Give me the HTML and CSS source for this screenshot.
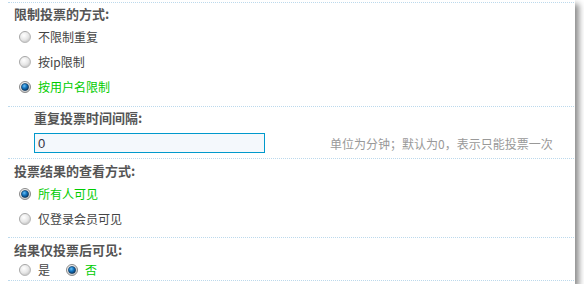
FILE: index.html
```html
<!DOCTYPE html>
<html>
<head>
<meta charset="utf-8">
<link rel="stylesheet" href="styles.css">
</head>
<body>
<svg width="0" height="0" class="defs">
  <defs>
    <radialGradient id="gOff" cx="40%" cy="35%" r="70%">
      <stop offset="0" stop-color="#ffffff"/>
      <stop offset="0.6" stop-color="#e6e6e6"/>
      <stop offset="1" stop-color="#bdbdbd"/>
    </radialGradient>
    <linearGradient id="gRing" x1="0" y1="0" x2="1" y2="1">
      <stop offset="0" stop-color="#9c9c9c"/>
      <stop offset="1" stop-color="#c4c4c4"/>
    </linearGradient>
    <radialGradient id="gDot" cx="40%" cy="35%" r="70%">
      <stop offset="0" stop-color="#6fc0f0"/>
      <stop offset="0.45" stop-color="#1477c4"/>
      <stop offset="1" stop-color="#08345e"/>
    </radialGradient>
  </defs>
</svg>
<div class="panel">
  <div class="sec s1">
    <div class="title">限制投票的方式:</div>
    <div class="opt"><svg class="radio" viewBox="0 0 12 12"><circle cx="6" cy="6" r="5.5" fill="url(#gOff)" stroke="url(#gRing)" stroke-width="1"/></svg><span class="lbl">不限制重复</span></div>
    <div class="opt"><svg class="radio" viewBox="0 0 12 12"><circle cx="6" cy="6" r="5.5" fill="url(#gOff)" stroke="url(#gRing)" stroke-width="1"/></svg><span class="lbl">按ip限制</span></div>
    <div class="opt"><svg class="radio" viewBox="0 0 12 12"><circle cx="6" cy="6" r="5.5" fill="url(#gOff)" stroke="#8a8a8a" stroke-width="1"/><circle cx="6" cy="6" r="3.6" fill="url(#gDot)" stroke="#0a2f52" stroke-width="0.6"/></svg><span class="lbl on">按用户名限制</span></div>
  </div>
  <div class="sec s2">
    <div class="title">重复投票时间间隔:</div>
    <div class="inrow">
      <input class="field" type="text" value="0">
      <span class="hint">单位为分钟；默认为0，表示只能投票一次</span>
    </div>
  </div>
  <div class="sec s3">
    <div class="title">投票结果的查看方式:</div>
    <div class="opt"><svg class="radio" viewBox="0 0 12 12"><circle cx="6" cy="6" r="5.5" fill="url(#gOff)" stroke="#8a8a8a" stroke-width="1"/><circle cx="6" cy="6" r="3.6" fill="url(#gDot)" stroke="#0a2f52" stroke-width="0.6"/></svg><span class="lbl on">所有人可见</span></div>
    <div class="opt"><svg class="radio" viewBox="0 0 12 12"><circle cx="6" cy="6" r="5.5" fill="url(#gOff)" stroke="url(#gRing)" stroke-width="1"/></svg><span class="lbl">仅登录会员可见</span></div>
  </div>
  <div class="sec s4">
    <div class="title">结果仅投票后可见:</div>
    <div class="opt inline">
      <svg class="radio" viewBox="0 0 12 12"><circle cx="6" cy="6" r="5.5" fill="url(#gOff)" stroke="url(#gRing)" stroke-width="1"/></svg><span class="lbl">是</span>
      <svg class="radio second" viewBox="0 0 12 12"><circle cx="6" cy="6" r="5.5" fill="url(#gOff)" stroke="#8a8a8a" stroke-width="1"/><circle cx="6" cy="6" r="3.6" fill="url(#gDot)" stroke="#0a2f52" stroke-width="0.6"/></svg><span class="lbl on">否</span>
    </div>
  </div>
</div>
</body>
</html>
```

FILE: styles.css
```css
html, body {
  margin: 0;
  padding: 0;
  background: #ffffff;
}
body {
  font-family: "Noto Sans CJK SC", "Liberation Sans", sans-serif;
  font-size: 12px;
  color: #444;
}
.defs {
  position: absolute;
  width: 0;
  height: 0;
}
.panel {
  width: 566px;
  height: 282px;
  padding: 2px 1px 0 8px;
  background: #ffffff;
  box-shadow: 4px 4px 6px rgba(0, 0, 0, 0.45);
}
.sec {
  border-top: 1px dotted #bcd9ec;
  box-sizing: border-box;
}
.s1 { height: 104px; padding-top: 1px; }
.s2 { height: 52px; padding-top: 1px; }
.s3 { height: 79px; padding-top: 2px; }
.s4 { height: 44px; padding-top: 2px; border-bottom: 1px dotted #bcd9ec; }

.title {
  height: 20px;
  line-height: 20px;
  font-size: 13px;
  font-weight: bold;
  color: #555;
  padding-left: 6px;
}
.s2 .title { padding-left: 26px; }
.opt {
  display: flex;
  align-items: center;
  height: 25px;
  padding-left: 11px;
}
.s4 .opt { height: 20px; }
.radio {
  width: 12px;
  height: 12px;
  flex: none;
}
.radio.second { margin-left: 16px; }
.lbl {
  margin-left: 7px;
  line-height: 16px;
  color: #444;
}
.lbl.on { color: #00cc00; }
.inrow {
  display: flex;
  align-items: center;
  margin-top: 5px;
  padding-left: 26px;
}
.field {
  box-sizing: border-box;
  width: 231px;
  height: 20px;
  margin: 0;
  padding: 0 3px;
  border: 1px solid #0099cc;
  background: #f4f8fc;
  font-family: "Liberation Sans", sans-serif;
  font-size: 13px;
  color: #334;
  outline: none;
}
.hint {
  margin-left: 65px;
  color: #999;
}
```
